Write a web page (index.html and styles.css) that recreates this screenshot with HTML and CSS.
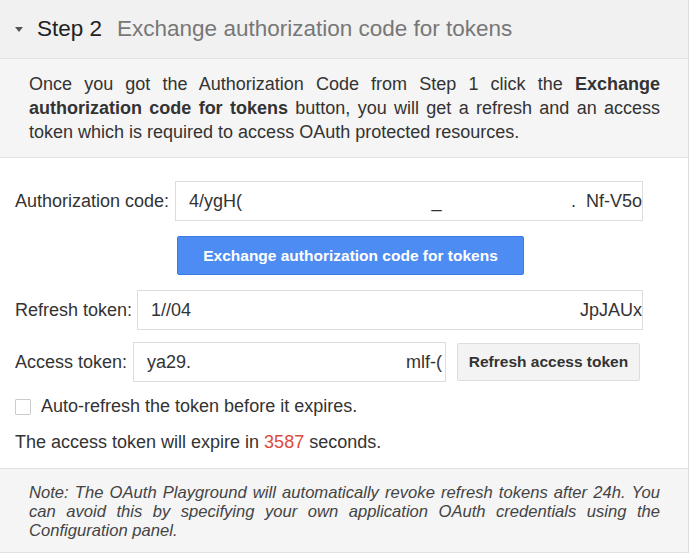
FILE: index.html
```html
<!DOCTYPE html>
<html lang="en">
<head>
    <meta charset="UTF-8">
    <title>OAuth 2.0 Playground - Step 2</title>
    <link rel="stylesheet" href="styles.css">
</head>
<body>
    <div class="step">
        <div class="step-header">
            <span class="caret"></span>
            <span class="step-num">Step 2</span>
            <span class="step-title">Exchange authorization code for tokens</span>
        </div>
        <div class="step-desc">
            Once you got the Authorization Code from Step 1 click the <b>Exchange authorization code for tokens</b> button, you will get a refresh and an access token which is required to access OAuth protected resources.
        </div>
        <div class="step-body">
            <div class="row row-code">
                <label class="field-label label-code">Authorization code:</label>
                <div class="field">
                    <span>4/ygH(</span>
                    <span class="mid">_</span>
                    <span>.&nbsp;&nbsp;Nf-V5o</span>
                </div>
            </div>
            <div class="row row-exchange">
                <button class="btn-primary">Exchange authorization code for tokens</button>
            </div>
            <div class="row row-refresh">
                <label class="field-label label-refresh">Refresh token:</label>
                <div class="field">
                    <span>1//04</span>
                    <span>JpJAUx</span>
                </div>
            </div>
            <div class="row row-access">
                <label class="field-label label-access">Access token:</label>
                <div class="field access-field">
                    <span>ya29.</span>
                    <span>mlf-(</span>
                </div>
                <button class="btn-plain">Refresh access token</button>
            </div>
            <div class="check-row">
                <span class="checkbox"></span>
                <span>Auto-refresh the token before it expires.</span>
            </div>
            <div class="expire">
                The access token will expire in <span class="secs">3587</span> seconds.
            </div>
        </div>
        <div class="step-note">
            Note: The OAuth Playground will automatically revoke refresh tokens after 24h. You can avoid this by specifying your own application OAuth credentials using the Configuration panel.
        </div>
    </div>
</body>
</html>
```

FILE: styles.css
```css
body {
    margin: 0;
    font-family: "Liberation Sans", Arial, sans-serif;
    color: #333;
    background-color: #fff;
}
.step {
    width: 688px;
    border-right: 1px solid #ddd;
}
.step-header {
    height: 58px;
    display: flex;
    align-items: center;
    background-color: #f1f1f1;
    border-bottom: 1px solid #e2e2e2;
    font-size: 22.5px;
}
.caret {
    width: 0;
    height: 0;
    margin: 0 14px 0 15px;
    border-left: 4px solid transparent;
    border-right: 4px solid transparent;
    border-top: 5px solid #555;
}
.step-num {
    color: #222;
    margin-right: 15px;
}
.step-title {
    color: #777;
}
.step-desc {
    background-color: #f5f5f5;
    border-bottom: 1px solid #e2e2e2;
    padding: 13px 28px 13px 29px;
    font-size: 18px;
    line-height: 24px;
    text-align: justify;
}
.step-body {
    padding: 23px 45px 15px 15px;
    font-size: 18px;
    border-bottom: 1px solid #e2e2e2;
}
.row {
    display: flex;
    align-items: center;
}
.row-code {
    margin-bottom: 15px;
}
.row-exchange {
    margin-bottom: 15px;
    padding-left: 162px;
}
.row-refresh {
    margin-bottom: 12px;
}
.row-access {
    margin-bottom: 14px;
}
.field-label {
    white-space: nowrap;
}
.label-code {
    width: 160px;
}
.label-refresh {
    width: 122px;
}
.label-access {
    width: 118px;
}
.field {
    flex: 1;
    box-sizing: border-box;
    height: 40px;
    border: 1px solid #ddd;
    padding: 0 0 0 13px;
    display: flex;
    align-items: center;
    justify-content: space-between;
    overflow: hidden;
    white-space: nowrap;
    color: #333;
}
.field .mid {
    margin-left: 60px;
}
.access-field {
    flex: 0 0 313px;
    margin-right: 11px;
    padding-right: 3px;
}
.btn-primary {
    width: 347px;
    height: 39px;
    background-color: #4d8cf3;
    color: #fff;
    font-family: "Liberation Sans", Arial, sans-serif;
    font-size: 15.5px;
    font-weight: bold;
    border: 1px solid #3d7ae6;
    border-radius: 2px;
}
.btn-plain {
    width: 183px;
    height: 38px;
    background-color: #f3f3f3;
    color: #333;
    font-family: "Liberation Sans", Arial, sans-serif;
    font-size: 15.5px;
    font-weight: bold;
    border: 1px solid #ddd;
    border-radius: 2px;
}
.check-row {
    display: flex;
    align-items: center;
}
.checkbox {
    width: 14px;
    height: 14px;
    border: 1px solid #ccc;
    border-radius: 1px;
    margin-right: 10px;
}
.expire {
    margin-top: 15px;
}
.secs {
    color: #dd4b39;
}
.step-note {
    background-color: #f5f5f5;
    border-bottom: 1px solid #e2e2e2;
    padding: 14px 28px 12px 29px;
    font-size: 16.6px;
    line-height: 19px;
    font-style: italic;
    color: #444;
    text-align: justify;
}
```
